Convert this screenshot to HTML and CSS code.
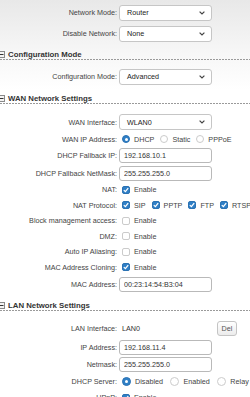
FILE: index.html
```html
<!DOCTYPE html>
<html>
<head>
<meta charset="utf-8">
<link rel="stylesheet" href="styles.css">
</head>
<body>
<div class="page">
  <div class="block top">
    <div class="row h-sel"><span class="lbl">Network Mode:</span><div class="select"><span>Router</span><svg class="chev" width="6" height="4" viewBox="0 0 6 4"><polyline points="0.6,0.6 3,3 5.4,0.6"/></svg></div></div>
    <div class="row h-sel"><span class="lbl">Disable Network:</span><div class="select"><span>None</span><svg class="chev" width="6" height="4" viewBox="0 0 6 4"><polyline points="0.6,0.6 3,3 5.4,0.6"/></svg></div></div>
  </div>

  <div class="sec s1"><svg class="toggle" width="7" height="7" viewBox="0 0 7 7"><rect x="0.5" y="0.5" width="6" height="6" fill="#f4f4f4" stroke="#8a8a8a"/><line x1="1.5" y1="3.5" x2="5.5" y2="3.5" stroke="#333"/></svg><span>Configuration Mode</span></div>
  <div class="block b1">
    <div class="row h-sel"><span class="lbl">Configuration Mode:</span><div class="select"><span>Advanced</span><svg class="chev" width="6" height="4" viewBox="0 0 6 4"><polyline points="0.6,0.6 3,3 5.4,0.6"/></svg></div></div>
  </div>

  <div class="sec s2"><svg class="toggle" width="7" height="7" viewBox="0 0 7 7"><rect x="0.5" y="0.5" width="6" height="6" fill="#f4f4f4" stroke="#8a8a8a"/><line x1="1.5" y1="3.5" x2="5.5" y2="3.5" stroke="#333"/></svg><span>WAN Network Settings</span></div>
  <div class="block b2">
    <div class="row h-sel2"><span class="lbl">WAN Interface:</span><div class="select"><span>WLAN0</span><svg class="chev" width="6" height="4" viewBox="0 0 6 4"><polyline points="0.6,0.6 3,3 5.4,0.6"/></svg></div></div>
    <div class="row h-opt1"><span class="lbl">WAN IP Address:</span><div class="opts"><span class="rd on"></span><span class="ot">DHCP</span><span class="rd"></span><span class="ot">Static</span><span class="rd"></span><span class="ot">PPPoE</span></div></div>
    <div class="row h-inp"><span class="lbl">DHCP Fallback IP:</span><input class="inp" type="text" value="192.168.10.1"></div>
    <div class="row h-inp"><span class="lbl">DHCP Fallback NetMask:</span><input class="inp" type="text" value="255.255.255.0"></div>
    <div class="row h-opt"><span class="lbl">NAT:</span><div class="opts"><span class="cb on"><svg width="6" height="6" viewBox="0 0 6 6"><polyline points="0.8,3.1 2.4,4.6 5.2,1.2"/></svg></span><span class="ot">Enable</span></div></div>
    <div class="row h-opt"><span class="lbl">NAT Protocol:</span><div class="opts"><span class="cb on"><svg width="6" height="6" viewBox="0 0 6 6"><polyline points="0.8,3.1 2.4,4.6 5.2,1.2"/></svg></span><span class="ot">SIP</span><span class="cb on"><svg width="6" height="6" viewBox="0 0 6 6"><polyline points="0.8,3.1 2.4,4.6 5.2,1.2"/></svg></span><span class="ot">PPTP</span><span class="cb on"><svg width="6" height="6" viewBox="0 0 6 6"><polyline points="0.8,3.1 2.4,4.6 5.2,1.2"/></svg></span><span class="ot">FTP</span><span class="cb on"><svg width="6" height="6" viewBox="0 0 6 6"><polyline points="0.8,3.1 2.4,4.6 5.2,1.2"/></svg></span><span class="ot">RTSP</span></div></div>
    <div class="row h-opt"><span class="lbl">Block management access:</span><div class="opts"><span class="cb"></span><span class="ot">Enable</span></div></div>
    <div class="row h-opt"><span class="lbl">DMZ:</span><div class="opts"><span class="cb"></span><span class="ot">Enable</span></div></div>
    <div class="row h-opt"><span class="lbl">Auto IP Aliasing:</span><div class="opts"><span class="cb"></span><span class="ot">Enable</span></div></div>
    <div class="row h-opt"><span class="lbl">MAC Address Cloning:</span><div class="opts"><span class="cb on"><svg width="6" height="6" viewBox="0 0 6 6"><polyline points="0.8,3.1 2.4,4.6 5.2,1.2"/></svg></span><span class="ot">Enable</span></div></div>
    <div class="row h-inp"><span class="lbl">MAC Address:</span><input class="inp" type="text" value="00:23:14:54:B3:04"></div>
  </div>

  <div class="sec s3"><svg class="toggle" width="7" height="7" viewBox="0 0 7 7"><rect x="0.5" y="0.5" width="6" height="6" fill="#f4f4f4" stroke="#8a8a8a"/><line x1="1.5" y1="3.5" x2="5.5" y2="3.5" stroke="#333"/></svg><span>LAN Network Settings</span></div>
  <div class="block b3">
    <div class="row h-lan"><span class="lbl">LAN Interface:</span><div class="lanval"><span class="lan0">LAN0</span><button class="btn" type="button">Del</button></div></div>
    <div class="row h-inp"><span class="lbl">IP Address:</span><input class="inp" type="text" value="192.168.11.4"></div>
    <div class="row h-inp2"><span class="lbl">Netmask:</span><input class="inp" type="text" value="255.255.255.0"></div>
    <div class="row h-opt2"><span class="lbl">DHCP Server:</span><div class="opts wide"><span class="rd on"></span><span class="ot">Disabled</span><span class="rd"></span><span class="ot">Enabled</span><span class="rd"></span><span class="ot">Relay</span></div></div>
    <div class="row h-opt"><span class="lbl">UPnP:</span><div class="opts"><span class="cb on"><svg width="6" height="6" viewBox="0 0 6 6"><polyline points="0.8,3.1 2.4,4.6 5.2,1.2"/></svg></span><span class="ot">Enable</span></div></div>
  </div>
</div>
</body>
</html>
```

FILE: styles.css
```css
html, body {
  margin: 0;
  padding: 0;
}

body {
  width: 250px;
  height: 397px;
  overflow: hidden;
  background: linear-gradient(#e8e8e8 0px, #f6f6f6 50px, #ffffff 90px);
  font-family: "Liberation Sans", Arial, sans-serif;
  font-size: 7.2px;
  color: #444;
}

.page {
  display: flex;
  flex-direction: column;
}

.top { padding-top: 2px; }
.b1 { padding-top: 6px; }
.b2 { padding-top: 8px; }
.b3 { padding-top: 7px; }

.row {
  display: grid;
  grid-template-columns: 117px 1fr;
  column-gap: 2px;
  align-items: center;
}

.h-sel { height: 21px; }
.h-sel2 { height: 20px; }
.h-opt1 { height: 14px; }
.h-inp { height: 18px; }
.h-inp2 { height: 17px; }
.h-opt { height: 15.5px; }
.h-opt2 { height: 17px; }
.h-lan { height: 20px; }

.lbl {
  text-align: right;
  white-space: nowrap;
}

.select {
  box-sizing: border-box;
  width: 93px;
  height: 16px;
  border: 1px solid #c6c6c6;
  border-radius: 3px;
  background: #fff;
  display: flex;
  align-items: center;
  justify-content: space-between;
  padding: 0 6px 0 7px;
  color: #222;
}

.chev polyline {
  fill: none;
  stroke: #444;
  stroke-width: 1.2;
}

.inp {
  box-sizing: border-box;
  width: 93px;
  height: 15px;
  margin: 0;
  border: 1px solid #b9b9b9;
  border-radius: 3px;
  padding: 0 4px;
  background: #fff;
  font-family: "Liberation Sans", Arial, sans-serif;
  font-size: 7.2px;
  color: #333;
  outline: none;
}

.opts {
  display: flex;
  align-items: center;
  white-space: nowrap;
}

.ot {
  margin-left: 4px;
  margin-right: 3px;
}

.opts.wide .ot {
  margin-right: 4.5px;
}

.opts.wide .rd {
  width: 9px;
  height: 9px;
}

.cb, .rd {
  box-sizing: border-box;
  width: 8px;
  height: 8px;
  margin-left: 3px;
  flex: none;
  border: 1px solid #cbcbcb;
  background: #fff;
  display: flex;
  align-items: center;
  justify-content: center;
}

.cb { border-radius: 2px; }
.rd { border-radius: 50%; }

.cb.on {
  background: #2f7fc6;
  border-color: #2b72b3;
}

.cb.on polyline {
  fill: none;
  stroke: #fff;
  stroke-width: 1.3;
}

.rd.on {
  background: #2f7fc6;
  border-color: #2b72b3;
}

.rd.on::after {
  content: "";
  width: 3px;
  height: 3px;
  border-radius: 50%;
  background: #fff;
}

.sec {
  display: flex;
  align-items: center;
  height: 10px;
  font-weight: bold;
  font-size: 7.8px;
  color: #333;
  background: repeating-linear-gradient(to right, #9a9a9a 0 2px, transparent 2px 3px) left bottom / 100% 1px no-repeat;
  padding-bottom: 1px;
}

.toggle {
  margin-left: -2px;
  margin-right: 3px;
  flex: none;
}

.s1 { margin-top: 5px; }
.s2 { margin-top: 6px; }
.s3 { margin-top: 7px; }

.lanval {
  display: flex;
  align-items: center;
}

.lan0 {
  margin-left: 3px;
  color: #333;
}

.btn {
  margin-left: auto;
  margin-right: 13px;
  box-sizing: border-box;
  width: 20px;
  height: 15px;
  padding: 0;
  border: 1px solid #c4c4c4;
  border-radius: 3px;
  background: linear-gradient(#ffffff, #ececec);
  font-family: "Liberation Sans", Arial, sans-serif;
  font-size: 7.2px;
  color: #555;
}
```
